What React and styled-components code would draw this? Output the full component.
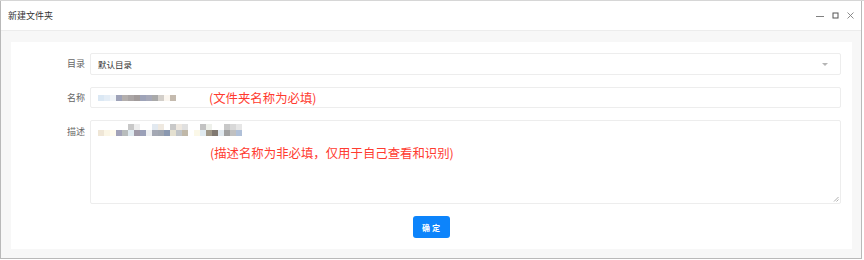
import React from 'react';
import styled, { createGlobalStyle } from 'styled-components';

const GlobalStyle = createGlobalStyle`
  html, body {
    margin: 0;
    padding: 0;
    background: #ffffff;
    font-family: 'Noto Sans CJK SC', 'Noto Sans', sans-serif;
  }
`;

const TopStrip = styled.div`
  height: 1px;
  background: #d6d6d6;
`;

const Window = styled.div`
  width: 860px;
  height: 257px;
  border: 1px solid #b9b9b9;
  border-top: none;
  display: flex;
  flex-direction: column;
  background: #ffffff;
`;

const Header = styled.div`
  height: 29px;
  flex-shrink: 0;
  display: flex;
  align-items: center;
  justify-content: space-between;
  padding: 0 7px 0 7px;
  border-bottom: 1px solid #ececec;
`;

const Title = styled.div`
  font-size: 9px;
  color: #333333;
`;

const Controls = styled.div`
  display: flex;
  align-items: center;
  gap: 8px;
  color: #808080;
`;

const Body = styled.div`
  flex: 1;
  background: #f7f7f7;
  padding: 11px 9px 9px 10px;
  display: flex;
`;

const Panel = styled.div`
  flex: 1;
  background: #ffffff;
  padding: 11px 11px 11px 0;
  display: flex;
  flex-direction: column;
  gap: 12px;
`;

const Row = styled.div`
  display: flex;
  align-items: ${(p) => (p.$top ? 'flex-start' : 'center')};
`;

const Label = styled.div`
  width: 74px;
  padding-right: 5px;
  text-align: right;
  font-size: 9px;
  color: #666666;
  line-height: 12px;
  padding-top: ${(p) => (p.$top ? '6px' : '0')};
`;

const Field = styled.div`
  flex: 1;
  box-sizing: border-box;
  height: ${(p) => p.$h}px;
  border: 1px solid #ededed;
  border-radius: 2px;
  background: #ffffff;
  display: flex;
  align-items: center;
  padding: 0 7px;
  position: relative;
`;

const Area = styled(Field)`
  flex-direction: column;
  align-items: flex-start;
  padding-top: 3px;
`;

const Value = styled.span`
  font-size: 8.5px;
  color: #333333;
  flex: 1;
`;

const Caret = styled.span`
  width: 0;
  height: 0;
  border-left: 3px solid transparent;
  border-right: 3px solid transparent;
  border-top: 3px solid #b5b5b5;
  margin-right: 5px;
`;

const Note = styled.span`
  font-size: 12.4px;
  color: #ff3b30;
  line-height: 14px;
  margin-left: ${(p) => p.$ml}px;
  margin-top: ${(p) => p.$mt || 0}px;
`;

const MosaicGrid = styled.div`
  display: flex;
  flex-direction: column;
`;

const MosaicRow = styled.div`
  display: flex;
`;

const Cell = styled.span`
  width: 6px;
  height: 6px;
  background: ${(p) => p.$c};
`;

const Grip = styled.svg`
  position: absolute;
  right: 1px;
  bottom: 1px;
`;

const Footer = styled.div`
  display: flex;
  justify-content: center;
  padding-left: 10px;
`;

const Button = styled.button`
  width: 37px;
  height: 22px;
  border: none;
  border-radius: 3px;
  background: #0d84fb;
  color: #ffffff;
  font-family: 'Noto Sans CJK SC', sans-serif;
  font-size: 8px;
  font-weight: 700;
  letter-spacing: 2px;
  padding: 0 0 0 2px;
`;

const W = '#ffffff';

const nameMosaic = [
  ['#dbe8f4', '#e4edf6', '#f0f4f8', '#9ea2b8', '#b4afad', '#aaa5a5', '#a19b9b', '#9ea3b8', '#a6a8b8', '#a9a9a9', '#d3cfca', '#fbf6ef', '#c4baae'],
];

const descMosaic = [
  [W, W, W, W, W, '#c8c8c8', '#eeeeee', W, W, '#e2e9f0', '#efe9e0', W, '#c8c8c8', '#eee8e0', '#e0e0e0', W, W, '#c2c2c2', '#eef0ea', W, W, '#c8c8c8', '#d8d8d8', '#e6e6e6'],
  ['#efe6d6', '#fbf6e6', '#fffbee', '#a2a2b8', '#b8bcbc', '#dfeaf0', '#a09aa8', '#9aa0b8', '#eef0f2', '#a4a8b4', '#a0a6b0', '#8a98b0', '#e4e0d0', '#c0c4c8', '#c0b8a8', W, '#fbf8e8', '#e0eaf0', '#a09888', '#807870', '#e0e8ee', '#a0a0a0', '#c0c0c0', '#b0c0d8'],
];

const Mosaic = ({ rows }) => (
  <MosaicGrid>
    {rows.map((r, i) => (
      <MosaicRow key={i}>
        {r.map((c, j) => (
          <Cell key={j} $c={c} />
        ))}
      </MosaicRow>
    ))}
  </MosaicGrid>
);

const App = () => (
  <>
    <GlobalStyle />
    <TopStrip />
    <Window>
      <Header>
        <Title>新建文件夹</Title>
        <Controls>
          <svg width="8" height="8" viewBox="0 0 8 8">
            <path d="M0 4.5H8" stroke="currentColor" strokeWidth="1" />
          </svg>
          <svg width="7" height="7" viewBox="0 0 7 7">
            <rect x="1" y="1" width="5" height="5" fill="none" stroke="#555" strokeWidth="1" />
          </svg>
          <svg width="7" height="7" viewBox="0 0 7 7">
            <path d="M0.5 0.5L6.5 6.5M6.5 0.5L0.5 6.5" stroke="currentColor" strokeWidth="0.9" />
          </svg>
        </Controls>
      </Header>
      <Body>
        <Panel>
          <Row>
            <Label>目录</Label>
            <Field $h={22}>
              <Value>默认目录</Value>
              <Caret />
            </Field>
          </Row>
          <Row>
            <Label>名称</Label>
            <Field $h={21}>
              <Mosaic rows={nameMosaic} />
              <Note $ml={33}>(文件夹名称为必填)</Note>
            </Field>
          </Row>
          <Row $top>
            <Label $top>描述</Label>
            <Area $h={84}>
              <Mosaic rows={descMosaic} />
              <Note $ml={112} $mt={10}>(描述名称为非必填，仅用于自己查看和识别)</Note>
              <Grip width="6" height="6" viewBox="0 0 6 6">
                <path d="M5.5 1L1 5.5M5.5 3.5L3.5 5.5" stroke="#9a9a9a" strokeWidth="0.8" />
              </Grip>
            </Area>
          </Row>
          <Footer>
            <Button>确定</Button>
          </Footer>
        </Panel>
      </Body>
    </Window>
  </>
);

export default App;
